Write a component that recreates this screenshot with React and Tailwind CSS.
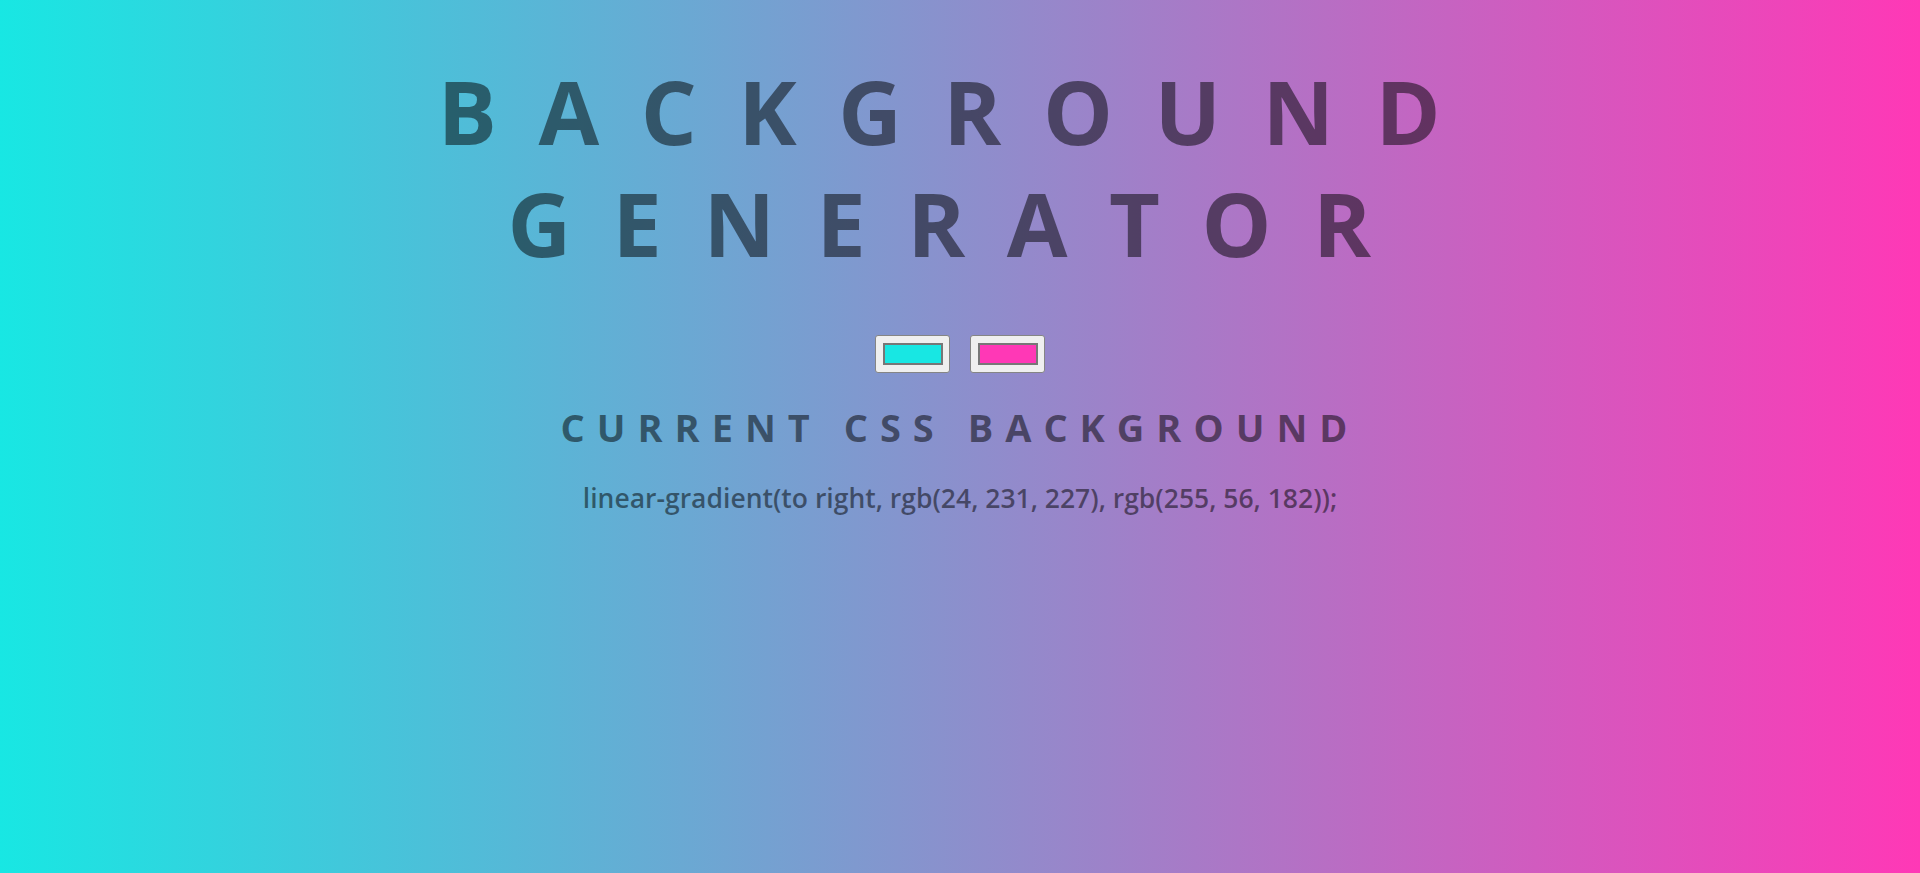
export default function App() {
  const font = { fontFamily: '"Open Sans", "Noto Sans", sans-serif' };
  return (
    <div
      className="min-h-screen w-full bg-[linear-gradient(to_right,rgb(24,231,227),rgb(255,56,182))] flex flex-col items-center text-center text-black/50"
      style={font}
    >
      <h1 className="mt-[55px] text-[88px] leading-[112px] font-bold uppercase tracking-[41.5px] w-[1160px]">
        Background Generator
      </h1>
      <div className="mt-[56px] flex gap-[20px]">
        <div className="w-[75px] h-[38px] bg-[#efefef] border border-[#858585] rounded-[3px] pl-[7px] pt-[7px]">
          <div className="w-[60px] h-[22px] bg-[rgb(24,231,227)] border-2 border-[#777777]" />
        </div>
        <div className="w-[75px] h-[38px] bg-[#efefef] border border-[#858585] rounded-[3px] pl-[7px] pt-[7px]">
          <div className="w-[60px] h-[22px] bg-[rgb(255,56,182)] border-2 border-[#777777]" />
        </div>
      </div>
      <h3 className="mt-[31px] text-[38px] leading-[46px] font-bold uppercase tracking-[12px]">
        Current CSS Background
      </h3>
      <p className="mt-[32px] text-[26.5px] leading-[32px] font-semibold">
        linear-gradient(to right, rgb(24, 231, 227), rgb(255, 56, 182));
      </p>
    </div>
  );
}
